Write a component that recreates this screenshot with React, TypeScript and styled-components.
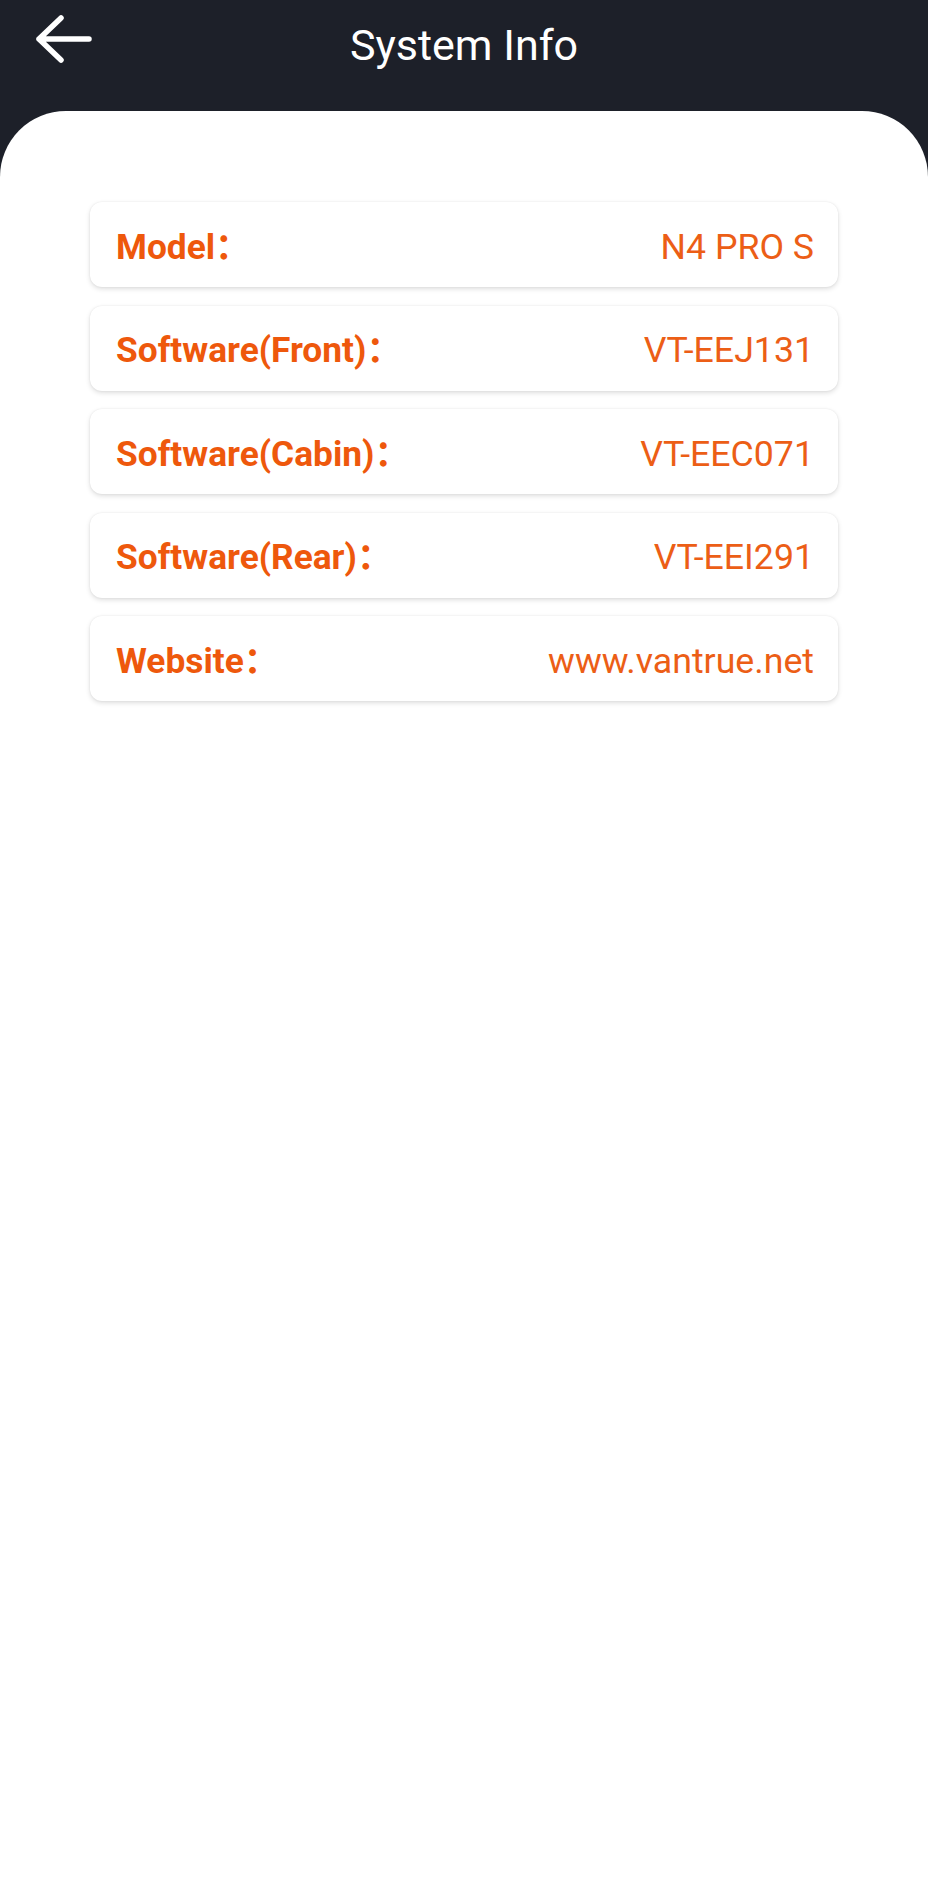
import React from "react";
import styled, { createGlobalStyle } from "styled-components";

const GlobalStyle = createGlobalStyle`
  html, body {
    margin: 0;
    padding: 0;
    background: #ffffff;
  }
  body {
    font-family: Roboto, "Noto Sans CJK SC", sans-serif;
    -webkit-font-smoothing: antialiased;
  }
  * { box-sizing: border-box; }
`;

const Page = styled.div`
  min-height: 1900px;
  background: #1d2029;
  display: flex;
  flex-direction: column;
`;

const Header = styled.header`
  height: 111px;
  display: grid;
  grid-template-columns: 1fr auto 1fr;
  align-items: start;
`;

const BackButton = styled.button`
  justify-self: start;
  margin: 14px 0 0 34px;
  padding: 0;
  border: none;
  background: transparent;
  width: 60px;
  height: 50px;
  display: flex;
  cursor: pointer;
`;

const Title = styled.h1`
  margin: 0;
  padding-top: 24px;
  font-family: Roboto, sans-serif;
  font-weight: 400;
  font-size: 43px;
  line-height: 1;
  color: #ffffff;
  white-space: nowrap;
`;

const Sheet = styled.main`
  flex: 1;
  background: #ffffff;
  border-radius: 66px 66px 0 0;
  padding: 91px 90px 0;
  display: flex;
  flex-direction: column;
  gap: 18.5px;
`;

const Card = styled.div`
  height: 85px;
  border-radius: 12px;
  background: #ffffff;
  box-shadow: 0 0 2px rgba(0, 0, 0, 0.08), 0 2px 5px rgba(0, 0, 0, 0.13);
  display: flex;
  align-items: center;
  justify-content: space-between;
  padding: 6px 24px 0 26px;
`;

const Label = styled.span`
  font-family: Roboto, "Noto Sans CJK SC", sans-serif;
  font-weight: 700;
  font-size: 35.3px;
  line-height: 1;
  color: #ee580c;
  white-space: nowrap;
`;

const Value = styled.span`
  font-family: Roboto, sans-serif;
  font-weight: 400;
  font-size: 35.7px;
  line-height: 1;
  color: #ec5e16;
  white-space: nowrap;
`;

const BackArrow = () => (
  <svg width="60" height="50" viewBox="0 0 60 50" fill="none">
    <path
      d="M5 25 H55 M27 4 L5 25 L27 46"
      stroke="#ffffff"
      strokeWidth="5.5"
      strokeLinecap="round"
      strokeLinejoin="round"
    />
  </svg>
);

const rows: { label: string; value: string }[] = [
  { label: "Model：", value: "N4 PRO S" },
  { label: "Software(Front)：", value: "VT-EEJ131" },
  { label: "Software(Cabin)：", value: "VT-EEC071" },
  { label: "Software(Rear)：", value: "VT-EEI291" },
  { label: "Website：", value: "www.vantrue.net" },
];

export default function App() {
  return (
    <>
      <GlobalStyle />
      <Page>
        <Header>
          <BackButton aria-label="Back">
            <BackArrow />
          </BackButton>
          <Title>System Info</Title>
          <div />
        </Header>
        <Sheet>
          {rows.map((r) => (
            <Card key={r.label}>
              <Label>{r.label}</Label>
              <Value>{r.value}</Value>
            </Card>
          ))}
        </Sheet>
      </Page>
    </>
  );
}
